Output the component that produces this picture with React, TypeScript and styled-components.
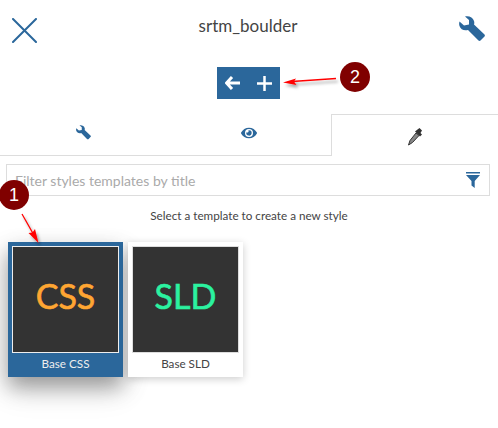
import React from "react";
import styled, { createGlobalStyle } from "styled-components";
import { FaEye } from "react-icons/fa";

const Global = createGlobalStyle`
  html, body { margin: 0; padding: 0; background: #fff; }
  body { font-family: "Lato", "Noto Sans", sans-serif; color: #333; }
`;

const Page = styled.div`
  position: relative;
  width: 498px;
  height: 428px;
  overflow: hidden;
`;

const Header = styled.header`
  height: 53px;
  display: flex;
  align-items: center;
  justify-content: space-between;
  padding: 0 13px 0 12px;
`;

const Title = styled.h1`
  margin: 0 0 3px;
  font-size: 17px;
  line-height: 1;
  font-weight: 400;
  color: #444;
`;

const IconSlot = styled.span<{ $top: number }>`
  display: flex;
  color: #2b679b;
  margin-top: ${(p) => p.$top}px;
`;

const ToolbarRow = styled.div`
  display: flex;
  justify-content: center;
  padding: 14px 1px 0 0;
  height: 61px;
  box-sizing: border-box;
`;

const ToolButton = styled.button`
  width: 31.5px;
  height: 32px;
  border: 0;
  padding: 0;
  background: #2b679b;
  color: #fff;
  display: flex;
  align-items: center;
  justify-content: center;
`;

const Tabs = styled.div`
  display: grid;
  grid-template-columns: 166px 165px 167px;
  height: 42px;
`;

const Tab = styled.div<{ $active?: boolean }>`
  display: flex;
  align-items: center;
  justify-content: center;
  box-sizing: border-box;
  padding-bottom: 4px;
  color: ${(p) => (p.$active ? "#333" : "#2b679b")};
  border-bottom: ${(p) => (p.$active ? "0" : "1px solid #ddd")};
  border-top: ${(p) => (p.$active ? "1px solid #ddd" : "0")};
  border-left: ${(p) => (p.$active ? "1px solid #ddd" : "0")};
`;

const DropperIcon = styled.svg`
  margin-top: 6px;
`;

const FilterBox = styled.div`
  margin: 8px 8px 0 6px;
  height: 32px;
  box-sizing: border-box;
  border: 1px solid #ddd;
  display: flex;
  align-items: center;
  justify-content: space-between;
  padding: 0 9px 0 8px;
  font-size: 14px;
  color: #aaa;
`;

const Hint = styled.p`
  margin: 11px 0 0;
  text-align: center;
  font-size: 11.7px;
  line-height: 16px;
  color: #444;
`;

const Cards = styled.div`
  display: flex;
  gap: 5px;
  padding: 19px 0 0 8px;
`;

const Card = styled.div<{ $selected?: boolean }>`
  width: 115px;
  height: 135px;
  box-sizing: border-box;
  padding: 4px 4px 0;
  background: ${(p) => (p.$selected ? "#2b679b" : "#fff")};
  color: ${(p) => (p.$selected ? "#eee" : "#444")};
  box-shadow: ${(p) =>
    p.$selected
      ? "0 10px 20px rgba(0,0,0,0.35), 0 14px 30px rgba(0,0,0,0.1)"
      : "0 2px 8px rgba(0,0,0,0.2)"};
`;

const Thumb = styled.div<{ $color: string; $selected?: boolean }>`
  height: 107px;
  box-sizing: border-box;
  border: 1px solid ${(p) => (p.$selected ? "#eee" : "#ddd")};
  background: #333;
  color: ${(p) => p.$color};
  display: flex;
  align-items: center;
  justify-content: center;
  padding-bottom: 7px;
  font-size: 34px;
  line-height: 1;
  -webkit-text-stroke: 0.6px ${(p) => p.$color};
`;

const CardLabel = styled.div`
  margin-top: 2px;
  text-align: center;
  font-size: 11.7px;
  line-height: 16px;
`;

const Badge = styled.div<{ $x: number; $y: number }>`
  position: absolute;
  left: ${(p) => p.$x}px;
  top: ${(p) => p.$y}px;
  width: 30px;
  height: 30px;
  border-radius: 50%;
  background: #800000;
  color: #fff;
  font-family: "Liberation Sans", sans-serif;
  font-size: 18px;
  display: flex;
  align-items: center;
  justify-content: center;
`;

const Overlay = styled.svg`
  position: absolute;
  inset: 0;
  pointer-events: none;
`;

const WrenchIcon = ({ size }: { size: number }) => (
  <svg width={size} height={size} viewBox="0 0 26 26">
    <path
      d="M6 .5C10-.5 14 1.5 15 5c.5 1.5.3 2.5 0 3.5l10.5 10c.5.5.5 1.5 0 2l-4 4c-.5.5-1.5.5-2 0L9 14c-4 1-7.5-.5-8.500-4C0 8.500 0 7 .5 5.500L5 9.500l5-1V4Z"
      fill="currentColor"
    />
  </svg>
);

export default function App() {
  return (
    <Page>
      <Global />
      <Header>
        <IconSlot $top={7}>
          <svg width="25" height="25" viewBox="0 0 25 25">
            <path d="M1 1 L24 24 M24 1 L1 24" stroke="#2b679b" strokeWidth="2" strokeLinecap="round" />
          </svg>
        </IconSlot>
        <Title>srtm_boulder</Title>
        <IconSlot $top={5}>
          <WrenchIcon size={26} />
        </IconSlot>
      </Header>
      <ToolbarRow>
        <ToolButton>
          <svg width="16" height="14" viewBox="0 0 16 14">
            <path d="M7 1 L1.500 7 L7 13 M2 7 H15" stroke="#fff" strokeWidth="3" fill="none" />
          </svg>
        </ToolButton>
        <ToolButton>
          <svg width="15" height="15" viewBox="0 0 15 15">
            <path d="M7.500 0 V15 M0 7.500 H15" stroke="#fff" strokeWidth="2.500" />
          </svg>
        </ToolButton>
      </ToolbarRow>
      <Tabs>
        <Tab>
          <WrenchIcon size={15} />
        </Tab>
        <Tab>
          <FaEye size={16} />
        </Tab>
        <Tab $active>
          <DropperIcon width="16" height="19" viewBox="0 0 16 19">
            <path d="M10.500 2.500 L12.500 1 L15 3.500 L13.500 6 L15 7.500 L13 9.500 L8 4.500 Z" fill="#333" />
            <path d="M9 6 L3 13.500 L1.500 18 L5.500 15.500 L12 8.500 Z" fill="#888" stroke="#333" strokeWidth="1" />
          </DropperIcon>
        </Tab>
      </Tabs>
      <FilterBox>
        <span>Filter styles templates by title</span>
        <svg width="14" height="16" viewBox="0 0 14 16">
          <path d="M0 0 H14 V1.500 H0 Z" fill="#2b679b" />
          <path d="M0 3 H14 L8.700 9 V16 L5.500 13.500 V9 Z" fill="#2b679b" />
        </svg>
      </FilterBox>
      <Hint>Select a template to create a new style</Hint>
      <Cards>
        <Card $selected>
          <Thumb $color="#ffa632" $selected>CSS</Thumb>
          <CardLabel>Base CSS</CardLabel>
        </Card>
        <Card>
          <Thumb $color="#2bf2a0">SLD</Thumb>
          <CardLabel>Base SLD</CardLabel>
        </Card>
      </Cards>
      <Overlay width="498" height="428" viewBox="0 0 498 428">
        <defs>
          <filter id="arrowShadow" x="-30%" y="-100%" width="160%" height="300%">
            <feDropShadow dx="2" dy="3" stdDeviation="1.500" floodColor="#000" floodOpacity="0.35" />
          </filter>
        </defs>
        <g filter="url(#arrowShadow)">
          <path d="M336 78.500 L292 81.500" stroke="#f00" strokeWidth="1.300" fill="none" />
          <path d="M283 82.500 L296 78.500 L294 81.500 L296.500 85 Z" fill="#f00" />
          <path d="M22 214 L35 237" stroke="#f00" strokeWidth="1.300" fill="none" />
          <path d="M38.500 243 L28.500 233 L32.500 232.500 L35 229 Z" fill="#f00" />
        </g>
      </Overlay>
      <Badge $x={340} $y={62}>2</Badge>
      <Badge $x={-1} $y={180}>1</Badge>
    </Page>
  );
}
